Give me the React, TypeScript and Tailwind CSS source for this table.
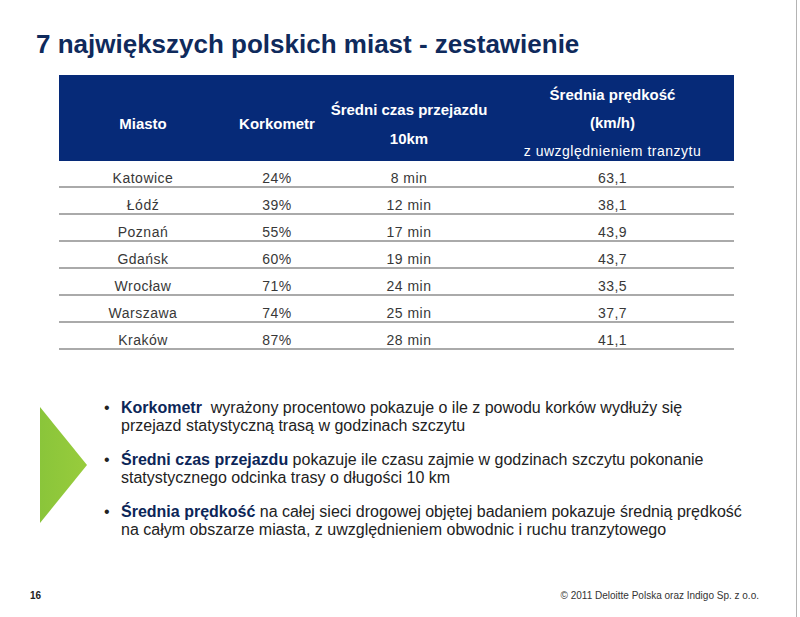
const cities = [
  { name: "Katowice", kork: "24%", time: "8 min", speed: "63,1" },
  { name: "Łódź", kork: "39%", time: "12 min", speed: "38,1" },
  { name: "Poznań", kork: "55%", time: "17 min", speed: "43,9" },
  { name: "Gdańsk", kork: "60%", time: "19 min", speed: "43,7" },
  { name: "Wrocław", kork: "71%", time: "24 min", speed: "33,5" },
  { name: "Warszawa", kork: "74%", time: "25 min", speed: "37,7" },
  { name: "Kraków", kork: "87%", time: "28 min", speed: "41,1" },
];

const cols = "grid grid-cols-[168px_100px_164px_243px]";

export default function App() {
  return (
    <div
      className="relative flex h-[617px] w-[797px] flex-col border-r border-[#b4b4b4] bg-white"
      style={{ fontFamily: '"Liberation Sans", Arial, sans-serif' }}
    >
      {/* Title */}
      <h1 className="pl-[36px] pt-[29px] text-[26px] font-bold leading-[30px] text-[#0f2a5c]">
        7 największych polskich miast - zestawienie
      </h1>

      {/* Table */}
      <div className="ml-[59px] mt-[16px] w-[675px]">
        <div className={`${cols} h-[86px] bg-[#062a78] text-[15px] font-bold text-white`}>
          <div className="flex items-center justify-center pt-[8px]">Miasto</div>
          <div className="flex items-center justify-center pt-[8px]">Korkometr</div>
          <div className="flex flex-col items-center pt-[20px] leading-[29px]">
            <span>Średni czas przejazdu</span>
            <span>10km</span>
          </div>
          <div className="flex flex-col items-center pt-[6px] leading-[28px]">
            <span>Średnia prędkość</span>
            <span>(km/h)</span>
            <span className="text-[14px] font-normal tracking-[0.5px]">z uwzględnieniem tranzytu</span>
          </div>
        </div>
        {cities.map((c) => (
          <div
            key={c.name}
            className={`${cols} h-[27px] border-b-2 border-[#aaaaaa] pt-[7px] text-center text-[14px] leading-[20px] tracking-[0.5px] text-[#383838]`}
          >
            <span>{c.name}</span>
            <span>{c.kork}</span>
            <span>{c.time}</span>
            <span>{c.speed}</span>
          </div>
        ))}
      </div>

      {/* Notes */}
      <div className="mt-[49px] flex items-start">
        <svg className="ml-[40px] mt-[8px]" width="47" height="116" viewBox="0 0 47 116">
          <defs>
            <linearGradient id="g" x1="0" y1="0" x2="1" y2="0">
              <stop offset="0" stopColor="#8ac53a" />
              <stop offset="1" stopColor="#98cc3c" />
            </linearGradient>
          </defs>
          <polygon points="0,0 47,58 0,116" fill="url(#g)" />
        </svg>
        <ul className="ml-[17px] flex flex-col gap-[16px] text-[16px] leading-[18px] text-[#222222]">
          <li className="flex">
            <span className="w-[17px] shrink-0">•</span>
            <span>
              <b className="text-[#0c2658]">Korkometr</b>&nbsp; wyrażony procentowo pokazuje o ile z powodu korków wydłuży się
              <br />
              przejazd statystyczną trasą w godzinach szczytu
            </span>
          </li>
          <li className="flex">
            <span className="w-[17px] shrink-0">•</span>
            <span>
              <b className="text-[#0c2658]">Średni czas przejazdu</b> pokazuje ile czasu zajmie w godzinach szczytu pokonanie
              <br />
              statystycznego odcinka trasy o długości 10 km
            </span>
          </li>
          <li className="flex">
            <span className="w-[17px] shrink-0">•</span>
            <span>
              <b className="text-[#0c2658]">Średnia prędkość</b> na całej sieci drogowej objętej badaniem pokazuje średnią prędkość
              <br />
              na całym obszarze miasta, z uwzględnieniem obwodnic i ruchu tranzytowego
            </span>
          </li>
        </ul>
      </div>

      {/* Footer */}
      <div className="mt-auto flex items-center justify-between pb-[15px] pl-[30px] pr-[37px] text-[10px] leading-[12px]">
        <span className="font-bold text-[#222222]">16</span>
        <span className="text-[#333333]">© 2011 Deloitte Polska oraz Indigo Sp. z o.o.</span>
      </div>
    </div>
  );
}
